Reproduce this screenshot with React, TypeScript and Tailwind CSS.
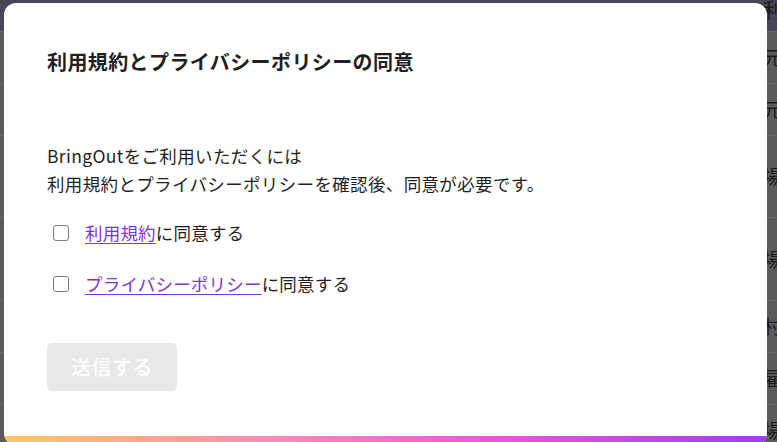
import React from 'react';

const rows = [
  { h: 'h-[52px]', ch: '元' },
  { h: 'h-[52px]', ch: '元' },
  { h: 'h-[82px]', ch: '場' },
  { h: 'h-[83px]', ch: '場' },
  { h: 'h-[52px]', ch: '村' },
  { h: 'h-[52px]', ch: '雇' },
  { h: 'h-[52px]', ch: '場' },
];

function Checkbox() {
  return <span className="block h-[16px] w-[16px] shrink-0 rounded-[3px] border-[1.5px] border-[#7a7a7a] bg-white" />;
}

function AgreeItem({ label }: { label: string }) {
  return (
    <label className="flex items-center gap-[16px] pl-[6px]">
      <Checkbox />
      <span>
        <a href="#" className="text-[#7d33e8] underline underline-offset-[3px] decoration-1">{label}</a>
        に同意する
      </span>
    </label>
  );
}

export default function App() {
  return (
    <div
      className="relative h-[442px] w-[777px] overflow-hidden bg-[#5b5b5b] text-[#1f1f1f]"
      style={{ fontFamily: '"Noto Sans CJK JP", "Noto Sans", sans-serif' }}
    >
      {/* page behind the overlay */}
      <div className="flex h-[31px] items-start whitespace-nowrap bg-[#4a4458] pl-[763px] text-[20px] leading-[20px] text-[#1a1a1a]">
        利用者
      </div>
      {rows.map((r, i) => (
        <div
          key={i}
          className={`flex ${r.h} items-center whitespace-nowrap border-t border-[#6a6a6a] pl-[763px] text-[19px] text-[#1a1a1a]`}
        >
          {r.ch}
        </div>
      ))}

      {/* consent dialog */}
      <div className="absolute left-[4px] top-[3px] flex h-[442px] w-[763px] flex-col overflow-hidden rounded-[12px] bg-white">
        <div className="flex flex-1 flex-col px-[43px]">
          <h2 className="mt-[45px] text-[20px] font-bold leading-[28px] tracking-[0.4px] text-[#1f1f1f]">
            利用規約とプライバシーポリシーの同意
          </h2>
          <p className="mt-[66px] text-[17.5px] leading-[28px] tracking-[0.35px]">
            BringOutをご利用いただくには
            <br />
            利用規約とプライバシーポリシーを確認後、同意が必要です。
          </p>
          <div className="mt-[21px] flex flex-col gap-[23px] text-[17.5px] leading-[28px] tracking-[0.2px]">
            <AgreeItem label="利用規約" />
            <AgreeItem label="プライバシーポリシー" />
          </div>
          <button
            type="button"
            disabled
            className="mt-[45px] h-[48px] w-[130px] rounded-[5px] bg-[#e8e8e8] text-[20px] font-medium tracking-[0.5px] text-white"
          >
            送信する
          </button>
        </div>
        <div className="h-[9px] bg-[linear-gradient(90deg,#ffc85e_0%,#ff80c0_40%,#ee50dc_66%,#9f3df2_100%)]" />
      </div>
    </div>
  );
}
